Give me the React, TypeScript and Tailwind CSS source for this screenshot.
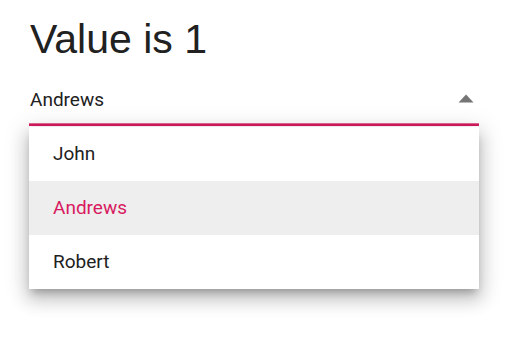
import React from "react";

export default function App() {
  const items = ["John", "Andrews", "Robert"];
  return (
    <div className="relative w-[519px] h-[343px] bg-white overflow-hidden pl-[29px] pr-[40px]">
      <div className="mt-[19px] h-[41px] leading-[41px] text-[41px] text-[#212121] pl-[1px]" style={{ fontFamily: '"Liberation Sans", Arial, sans-serif' }}>
        Value is 1
      </div>
      <div className="relative mt-[28px]" style={{ fontFamily: 'Roboto, "Liberation Sans", sans-serif' }}>
        <div className="flex items-center justify-between h-[24px] pl-[1px] pr-[5px] text-[19px] leading-[24px] text-[#212121]">
          <span>Andrews</span>
          <svg width="16" height="9" viewBox="0 0 16 9" className="mb-[3px]">
            <path d="M0.5 8.5 L8 0.5 L15.5 8.5 Z" fill="#757575" />
          </svg>
        </div>
        <div className="mt-[11px] h-[3px] bg-[#d81b60] border-t border-[#e46a93]" />
        <div className="absolute left-0 right-0 top-[39px] bg-white shadow-[0_6px_8px_-3px_rgba(0,0,0,0.25),0_10px_16px_2px_rgba(0,0,0,0.14),0_4px_22px_4px_rgba(0,0,0,0.12)]">
          {items.map((it) => (
            <div
              key={it}
              className={
                it === "Andrews"
                  ? "h-[54px] flex items-center pl-[24px] text-[19px] bg-[#eeeeee] text-[#d81b60]"
                  : "h-[54px] flex items-center pl-[24px] text-[19px] text-[#212121]"
              }
            >
              {it}
            </div>
          ))}
        </div>
      </div>
    </div>
  );
}
